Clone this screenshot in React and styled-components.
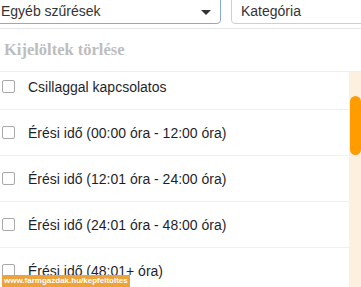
import styled, { createGlobalStyle } from 'styled-components';

const GlobalStyle = createGlobalStyle`
  html, body {
    margin: 0;
    padding: 0;
    background: #fff;
  }
`;

const rows = [
  'Csillaggal kapcsolatos',
  'Érési idő (00:00 óra - 12:00 óra)',
  'Érési idő (12:01 óra - 24:00 óra)',
  'Érési idő (24:01 óra - 48:00 óra)',
  'Érési idő (48:01+ óra)',
];

const App = () => {
  return (
    <Page>
      <GlobalStyle />
      <TopBar>
        <Select $focused>
          Egyéb szűrések
          <Caret />
        </Select>
        <Select>Kategória</Select>
      </TopBar>
      <ClearRow>Kijelöltek törlése</ClearRow>
      <Body>
        <List>
          <ListInner>
            {rows.map((text, index) => (
              <Row key={index}>
                <Check />
                <Label>{text}</Label>
              </Row>
            ))}
          </ListInner>
        </List>
        <Track>
          <Thumb />
        </Track>
      </Body>
      <Watermark>www.farmgazdak.hu/kepfeltoltes</Watermark>
    </Page>
  );
};

export default App;

const Page = styled.div`
  position: relative;
  width: 361px;
  height: 287px;
  overflow: hidden;
  background: #fff;
  font-family: 'Liberation Sans', Arial, sans-serif;
`;

const TopBar = styled.div`
  display: flex;
  gap: 10px;
  height: 28px;
  border-bottom: 1px solid #e6e6e6;
`;

const Select = styled.div`
  position: relative;
  flex: ${(p) => (p.$focused ? '0 0 227px' : '0 0 160px')};
  margin-left: ${(p) => (p.$focused ? '-6px' : '0')};
  margin-top: -6px;
  height: 30px;
  box-sizing: border-box;
  border: 1px solid ${(p) => (p.$focused ? '#86a9de' : '#cfcfcf')};
  border-radius: 4px;
  padding: 6px 0 0 ${(p) => (p.$focused ? '6px' : '9px')};
  font-size: 14px;
  line-height: 20px;
  color: #333;
`;

const Caret = styled.span`
  position: absolute;
  right: 9px;
  top: 15px;
  width: 0;
  height: 0;
  border-left: 5px solid transparent;
  border-right: 5px solid transparent;
  border-top: 5px solid #333;
`;

const ClearRow = styled.div`
  height: 42px;
  display: flex;
  align-items: center;
  padding-left: 4px;
  font-family: 'Liberation Serif', Georgia, serif;
  font-weight: bold;
  font-size: 16.5px;
  color: #bdbdbd;
  border-bottom: 1px solid #eeeeee;
`;

const Body = styled.div`
  display: flex;
  height: 215px;
`;

const List = styled.div`
  flex: 1;
  overflow: hidden;
`;

const ListInner = styled.div`
  margin-top: -8px;
`;

const Row = styled.div`
  height: 45px;
  display: flex;
  align-items: center;
  border-bottom: 1px solid #efefef;
`;

const Check = styled.span`
  width: 13px;
  height: 13px;
  margin-left: 2px;
  box-sizing: border-box;
  border: 1px solid #a8a8a8;
  border-radius: 2px;
  background: #fff;
`;

const Label = styled.span`
  margin-left: 13px;
  font-size: 14px;
  color: #1f1f2a;
`;

const Track = styled.div`
  flex: 0 0 12px;
  background: #fef0de;
  padding-top: 24px;
`;

const Thumb = styled.div`
  margin-left: 1px;
  width: 11px;
  height: 59px;
  border-radius: 6px;
  background: #ff9c00;
`;

const Watermark = styled.div`
  position: absolute;
  left: 2px;
  bottom: 0;
  height: 12px;
  padding: 0 2px;
  background: #eda23a;
  color: #fff;
  font-family: 'Liberation Sans', Arial, sans-serif;
  font-weight: bold;
  font-size: 8px;
  line-height: 12px;
  white-space: nowrap;
`;
